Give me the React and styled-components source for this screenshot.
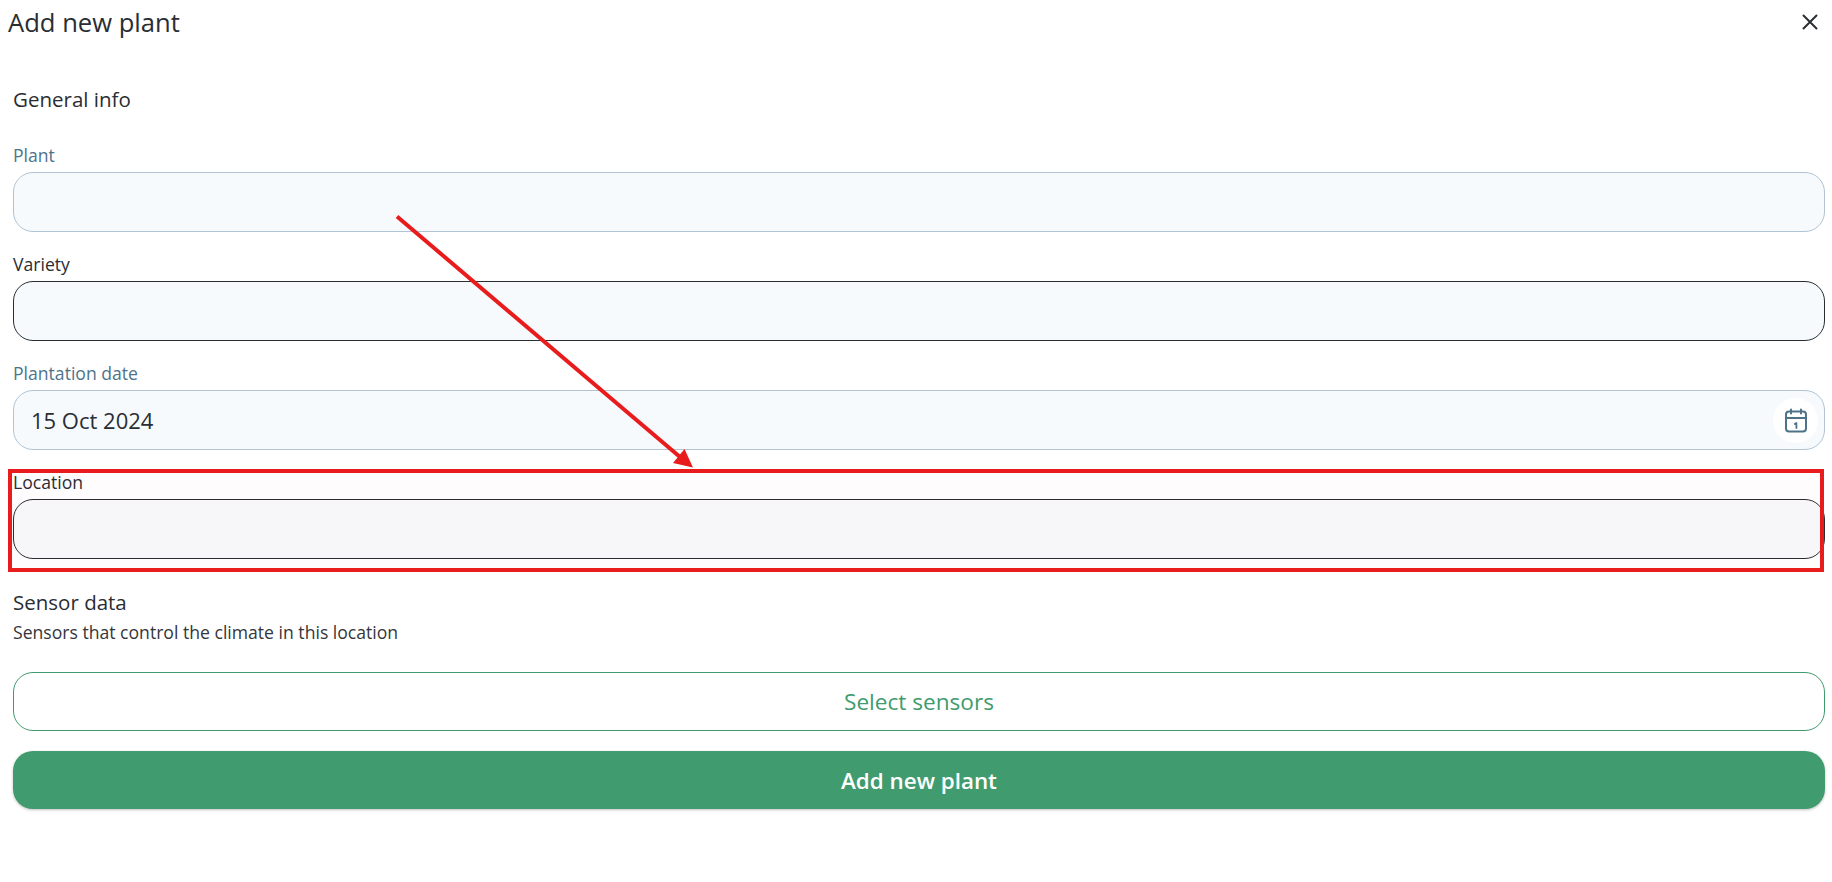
import React from "react";
import styled, { createGlobalStyle } from "styled-components";

const Global = createGlobalStyle`
  html, body { margin: 0; padding: 0; background: #fff; }
  body { font-family: "Open Sans", "Noto Sans", sans-serif; color: #2a2d32; }
  * { box-sizing: border-box; }
`;

const Page = styled.div`
  position: relative;
  width: 1832px;
  height: 882px;
  overflow: hidden;
  background: #fff;
`;

const Header = styled.header`
  display: flex;
  align-items: center;
  justify-content: space-between;
  height: 48px;
  padding: 0 10px 0 8px;
`;

const Title = styled.h1`
  margin: -2px 0 0;
  font-size: 25.6px;
  font-weight: 400;
  line-height: 48px;
`;

const CloseButton = styled.button`
  display: flex;
  padding: 0;
  border: 0;
  background: none;
  color: #2a2d32;
  margin-top: -5px;
`;

const Form = styled.form`
  display: flex;
  flex-direction: column;
  padding: 39px 7px 0 13px;
`;

const SectionTitle = styled.h2`
  margin: 0;
  font-size: 20.5px;
  font-weight: 500;
  line-height: 24px;
`;

const Fields = styled.div`
  display: grid;
  gap: 21px;
  margin-top: 33px;
`;

const Field = styled.div`
  display: flex;
  flex-direction: column;
  gap: 6px;
`;

const Label = styled.label`
  font-size: 17.6px;
  line-height: 22px;
  color: ${(p) => (p.$accent ? "#4e7389" : "#2a2d32")};
`;

const InputBox = styled.div`
  display: flex;
  align-items: center;
  height: 60px;
  padding: 0 6px 0 17px;
  border-radius: 20px;
  border: 1px solid ${(p) => (p.$dark ? "#2a2d32" : "#b2c3d3")};
  background: ${(p) => p.$bg || "#f6fafd"};
`;

const Input = styled.input`
  flex: 1;
  min-width: 0;
  height: 100%;
  padding: 0;
  border: 0;
  outline: 0;
  background: transparent;
  font: 400 22px/30px "Open Sans", "Noto Sans", sans-serif;
  color: #2a2d32;
`;

const IconCircle = styled.span`
  display: flex;
  align-items: center;
  justify-content: center;
  width: 45px;
  height: 45px;
  border-radius: 50%;
  background: #fff;
  color: #4e7389;
`;

const SensorHeading = styled.div`
  margin-top: 30px;
`;

const SensorTitle = styled(SectionTitle)`
  line-height: 26px;
`;

const SensorHint = styled.p`
  margin: 6px 0 0;
  font-size: 17.6px;
  line-height: 22px;
  color: #33363b;
`;

const OutlineButton = styled.button`
  height: 59px;
  margin-top: 29px;
  border-radius: 20px;
  border: 1px solid #409b6e;
  background: #fff;
  color: #409b6e;
  font: 400 22.6px "Open Sans", "Noto Sans", sans-serif;
`;

const PrimaryButton = styled.button`
  height: 58px;
  margin-top: 20px;
  border-radius: 20px;
  border: 0;
  background: #409b6e;
  color: #fff;
  font: 600 22.4px "Open Sans", "Noto Sans", sans-serif;
  box-shadow: 0 1px 3px rgba(0, 0, 0, 0.25);
`;

const Highlight = styled.div`
  position: absolute;
  left: 8px;
  top: 469px;
  width: 1816px;
  height: 103px;
  border: 4px solid #e81c1c;
  background: rgba(255, 0, 80, 0.012);
  pointer-events: none;
`;

const ArrowLayer = styled.svg`
  position: absolute;
  left: 0;
  top: 0;
  pointer-events: none;
`;

const CloseIcon = () => (
  <svg width="24" height="24" viewBox="0 0 24 24" fill="none" stroke="currentColor" strokeWidth="2" strokeLinecap="round">
    <path d="M5.5 5.5l13 13M18.5 5.5l-13 13" />
  </svg>
);

const CalendarIcon = () => (
  <svg width="24" height="26" viewBox="0 0 24 26" fill="none" stroke="currentColor" strokeWidth="2" strokeLinecap="round" strokeLinejoin="round">
    <rect x="2" y="4.5" width="20" height="20" rx="3" />
    <path d="M2 11h20M7 2.5v4M17 2.5v4" />
    <path d="M10.8 17l1.6-1v5" strokeWidth="1.8" />
  </svg>
);

export default function App() {
  return (
    <Page>
      <Global />
      <Header>
        <Title>Add new plant</Title>
        <CloseButton type="button" aria-label="Close">
          <CloseIcon />
        </CloseButton>
      </Header>
      <Form>
        <SectionTitle>General info</SectionTitle>
        <Fields>
          <Field>
            <Label $accent>Plant</Label>
            <InputBox>
              <Input />
            </InputBox>
          </Field>
          <Field>
            <Label>Variety</Label>
            <InputBox $dark>
              <Input />
            </InputBox>
          </Field>
          <Field>
            <Label $accent>Plantation date</Label>
            <InputBox>
              <Input defaultValue="15 Oct 2024" readOnly />
              <IconCircle>
                <CalendarIcon />
              </IconCircle>
            </InputBox>
          </Field>
          <Field>
            <Label>Location</Label>
            <InputBox $dark $bg="#f7fafc">
              <Input />
            </InputBox>
          </Field>
        </Fields>
        <SensorHeading>
          <SensorTitle>Sensor data</SensorTitle>
          <SensorHint>Sensors that control the climate in this location</SensorHint>
        </SensorHeading>
        <OutlineButton type="button">Select sensors</OutlineButton>
        <PrimaryButton type="button">Add new plant</PrimaryButton>
      </Form>
      <Highlight />
      <ArrowLayer width="1832" height="882" viewBox="0 0 1832 882">
        <line x1="397" y1="216.5" x2="680" y2="457" stroke="#e81c1c" strokeWidth="4" />
        <polygon points="693,467.5 673,463 684.5,449" fill="#e81c1c" />
      </ArrowLayer>
    </Page>
  );
}
